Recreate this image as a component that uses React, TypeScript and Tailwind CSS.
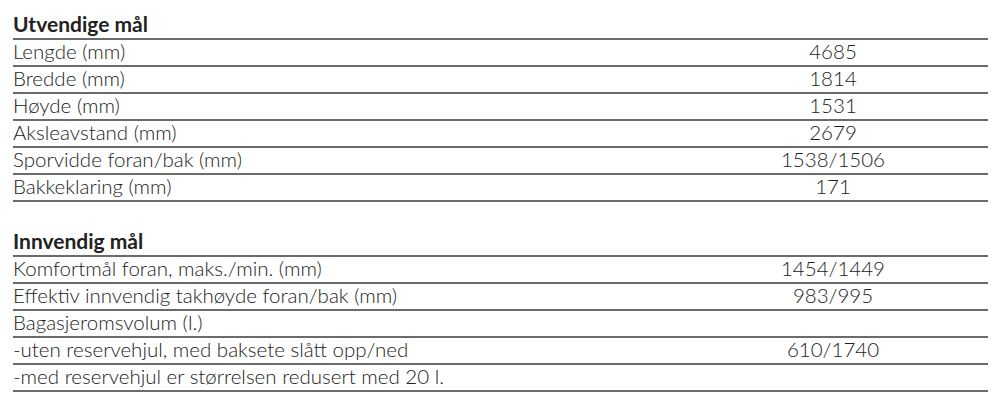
const outer: [string, string][] = [
  ["Lengde (mm)", "4685"],
  ["Bredde (mm)", "1814"],
  ["Høyde (mm)", "1531"],
  ["Aksleavstand (mm)", "2679"],
  ["Sporvidde foran/bak (mm)", "1538/1506"],
  ["Bakkeklaring (mm)", "171"],
];

const inner: [string, string][] = [
  ["Komfortmål foran, maks./min. (mm)", "1454/1449"],
  ["Effektiv innvendig takhøyde foran/bak (mm)", "983/995"],
  ["Bagasjeromsvolum (l.)", ""],
  ["-uten reservehjul, med baksete slått opp/ned", "610/1740"],
  ["-med reservehjul er størrelsen redusert med 20 l.", ""],
];

function Section({ title, rows }: { title: string; rows: [string, string][] }) {
  return (
    <div>
      <div className="flex h-[27px] items-end border-b-2 border-[#6b6b6b] pb-[4px] text-[21px] font-bold leading-none">
        {title}
      </div>
      {rows.map(([label, value]) => (
        <div key={label} className="flex h-[27px] items-center border-b-2 border-[#6b6b6b] pb-[2px] text-[20.5px] font-light leading-none">
          <div className="flex-1">{label}</div>
          <div className="w-[310px] text-center">{value}</div>
        </div>
      ))}
    </div>
  );
}

export default function App() {
  return (
    <div className="h-[408px] w-[1000px] bg-white pl-[13px] pr-[12px] pt-[13px] text-[#222]" style={{ fontFamily: "Lato, 'Noto Sans', sans-serif" }}>
      <Section title="Utvendige mål" rows={outer} />
      <div className="h-[28px]" />
      <Section title="Innvendig mål" rows={inner} />
    </div>
  );
}
